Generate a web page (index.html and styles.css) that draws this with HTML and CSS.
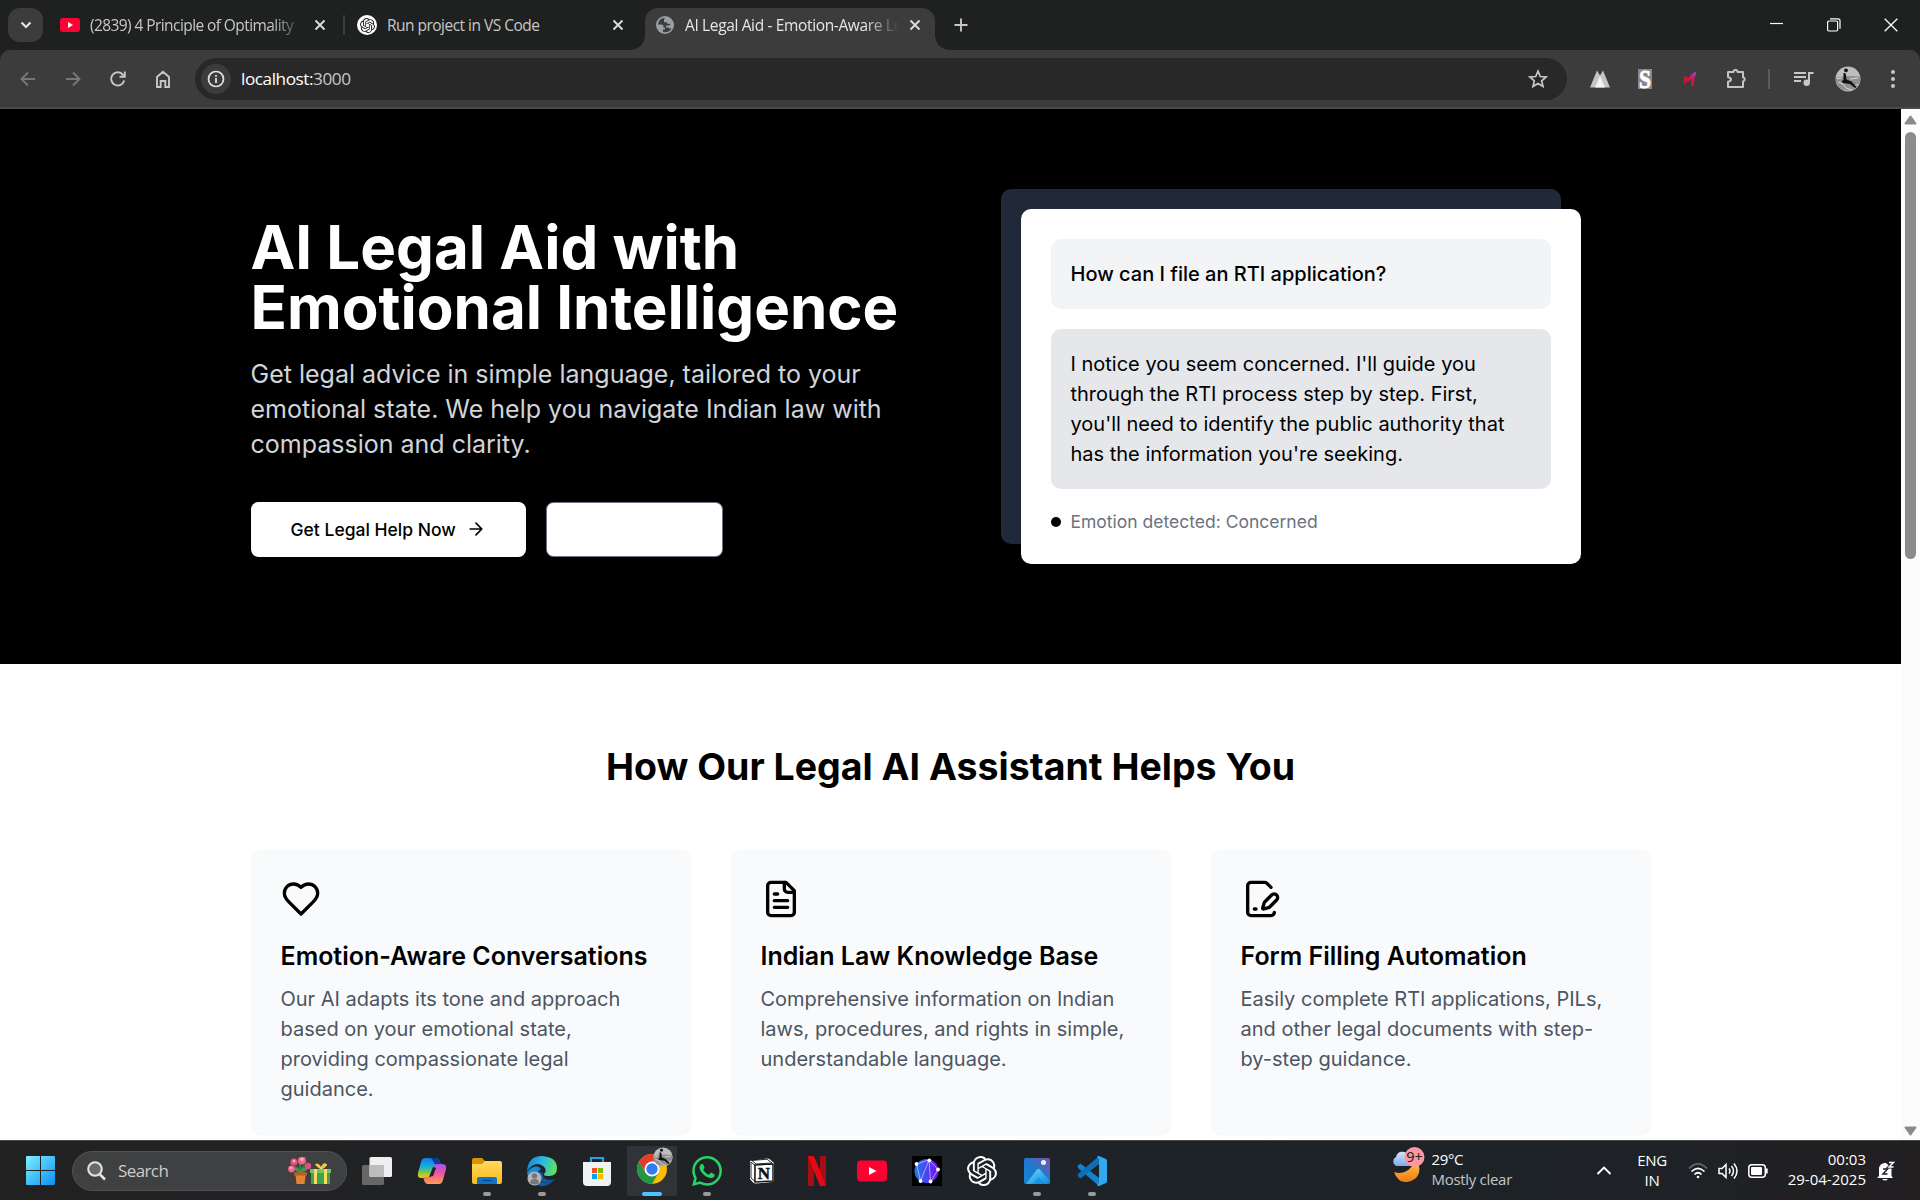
FILE: index.html
```html
<!DOCTYPE html>
<html lang="en">
<head>
<meta charset="utf-8">
<title>AI Legal Aid - Emotion-Aware Legal Assistant</title>
<link rel="stylesheet" href="styles.css">
</head>
<body>
<svg class="defs" width="0" height="0" aria-hidden="true">
  <defs>
    <symbol id="x" viewBox="0 0 12 12"><path d="M1.5 1.5l9 9M10.5 1.5l-9 9" fill="none" stroke="currentColor" stroke-width="1.9"/></symbol>
    <symbol id="openai" viewBox="0 0 24 24"><path fill="currentColor" d="M22.2819 9.8211a5.9847 5.9847 0 0 0-.5157-4.9108 6.0462 6.0462 0 0 0-6.5098-2.9A6.0651 6.0651 0 0 0 4.9807 4.1818a5.9847 5.9847 0 0 0-3.9977 2.9 6.0462 6.0462 0 0 0 .7427 7.0966 5.98 5.98 0 0 0 .511 4.9107 6.051 6.051 0 0 0 6.5146 2.9001A5.9847 5.9847 0 0 0 13.2599 24a6.0557 6.0557 0 0 0 5.7718-4.2058 5.9894 5.9894 0 0 0 3.9977-2.9001 6.0557 6.0557 0 0 0-.7475-7.0729zm-9.022 12.6081a4.4755 4.4755 0 0 1-2.8764-1.0408l.1419-.0804 4.7783-2.7582a.7948.7948 0 0 0 .3927-.6813v-6.7369l2.02 1.1686a.071.071 0 0 1 .038.052v5.5826a4.504 4.504 0 0 1-4.4945 4.4944zm-9.6607-4.1254a4.4708 4.4708 0 0 1-.5346-3.0137l.142.0852 4.783 2.7582a.7712.7712 0 0 0 .7806 0l5.8428-3.3685v2.3324a.0804.0804 0 0 1-.0332.0615L9.74 19.9502a4.4992 4.4992 0 0 1-6.1408-1.6464zM2.3408 7.8956a4.485 4.485 0 0 1 2.3655-1.9728V11.6a.7664.7664 0 0 0 .3879.6765l5.8144 3.3543-2.0201 1.1685a.0757.0757 0 0 1-.071 0l-4.8303-2.7865A4.504 4.504 0 0 1 2.3408 7.872zm16.5963 3.8558L13.1038 8.364 15.1192 7.2a.0757.0757 0 0 1 .071 0l4.8303 2.7913a4.4944 4.4944 0 0 1-.6765 8.1042v-5.6772a.79.79 0 0 0-.407-.667zm2.0107-3.0231l-.142-.0852-4.7735-2.7818a.7759.7759 0 0 0-.7854 0L9.409 9.2297V6.8974a.0662.0662 0 0 1 .0284-.0615l4.8303-2.7866a4.4992 4.4992 0 0 1 6.6802 4.66zM8.3065 12.863l-2.02-1.1638a.0804.0804 0 0 1-.038-.0567V6.0742a4.4992 4.4992 0 0 1 7.3757-3.4537l-.142.0805L8.704 5.459a.7948.7948 0 0 0-.3927.6813zm1.0976-2.3654l2.602-1.4998 2.6069 1.4998v2.9994l-2.5974 1.4997-2.6067-1.4997Z"/></symbol>
    <symbol id="portrait" viewBox="0 0 26 26"><circle cx="13" cy="13" r="12.5" fill="#bdbdbd"/><path d="M1 12c6-2 17-3 24-1v4c-1 5-6 9.500-12 9.500S1.500 21 1 15z" fill="#8f8f8f"/><path d="M3 16l5 2 3 4 6 2M15 13l8-1M2 13l5-1M20 20l3-2" stroke="#d8d8d8" fill="none"/><circle cx="11" cy="4.300" r="1.900" fill="#111"/><path d="M8.500 7q2.500-.500 2.500 2l.500 4.500 5 2 5 5.500-1.500 1-5-4-7-1q-2.500-2 .500-3z" fill="#111"/></symbol>
    <linearGradient id="win" x1="0" y1="0" x2="1" y2="1"><stop offset="0" stop-color="#7df0ff"/><stop offset="1" stop-color="#0b90f5"/></linearGradient>
    <linearGradient id="copA" x1="0" y1="0" x2="0" y2="1"><stop offset="0" stop-color="#1479e8"/><stop offset=".45" stop-color="#16b2d8"/><stop offset=".75" stop-color="#8fc93a"/><stop offset="1" stop-color="#ffc900"/></linearGradient>
    <linearGradient id="copB" x1="0" y1="0" x2="0" y2="1"><stop offset="0" stop-color="#a352ee"/><stop offset=".5" stop-color="#f2569b"/><stop offset="1" stop-color="#ffa24c"/></linearGradient>
    <linearGradient id="fold" x1="0" y1="0" x2="0" y2="1"><stop offset="0" stop-color="#ffda58"/><stop offset="1" stop-color="#f9b91e"/></linearGradient>
    <linearGradient id="edgeA" x1="0" y1=".3" x2="1" y2=".5"><stop offset="0" stop-color="#1587d8"/><stop offset=".5" stop-color="#2cb9e2"/><stop offset="1" stop-color="#5fe45c"/></linearGradient>
    <linearGradient id="edgeB" x1="0" y1="0" x2="1" y2="1"><stop offset="0" stop-color="#1b9de8"/><stop offset="1" stop-color="#0b4a94"/></linearGradient>
    <linearGradient id="mesh" x1="0" y1="0" x2="1" y2="0"><stop offset="0" stop-color="#1682e8"/><stop offset="1" stop-color="#7a0cf5"/></linearGradient>
    <linearGradient id="photo" x1="0" y1="1" x2="1" y2="0"><stop offset="0" stop-color="#1685d8"/><stop offset=".5" stop-color="#1f78cb"/><stop offset="1" stop-color="#7b55a8"/></linearGradient>
    <linearGradient id="hill" x1="0" y1="0" x2="1" y2="1"><stop offset="0" stop-color="#65e1fb"/><stop offset="1" stop-color="#0c86df"/></linearGradient>
    <linearGradient id="moon" x1="0" y1="0" x2="0" y2="1"><stop offset="0" stop-color="#ffc24a"/><stop offset="1" stop-color="#ee7d14"/></linearGradient>
    <linearGradient id="cloud" x1="0" y1="0" x2="0" y2="1"><stop offset="0" stop-color="#d4e4fb"/><stop offset="1" stop-color="#7fa9ec"/></linearGradient>
    <linearGradient id="em" x1="1" y1="0" x2="0" y2="1"><stop offset="0" stop-color="#a63bd6"/><stop offset=".5" stop-color="#d9123e"/><stop offset="1" stop-color="#b01328"/></linearGradient>
  </defs>
</svg>

<div class="screen">
  <header class="tabstrip">
    <button class="tab-search" aria-label="Search tabs"><svg width="12" height="8" viewBox="0 0 12 8"><path d="M1.500 1.500L6 6l4.500-4.500" fill="none" stroke="currentColor" stroke-width="2.200"/></svg></button>
    <div class="tab tab-one">
      <svg class="fav" width="20" height="14" viewBox="0 0 20 14"><rect width="20" height="14" rx="3" fill="#ff0033"/><path d="M8 4l5 3-5 3z" fill="#fff"/></svg>
      <span class="tab-title fade">(2839) 4 Principle of Optimality</span>
      <svg class="close" width="12" height="12"><use href="#x"/></svg>
    </div>
    <i class="tab-sep"></i>
    <div class="tab tab-two">
      <span class="gpt"><svg width="15" height="15"><use href="#openai"/></svg></span>
      <span class="tab-title">Run project in VS Code</span>
      <svg class="close" width="12" height="12"><use href="#x"/></svg>
    </div>
    <div class="tab tab-active">
      <svg class="globe" width="18" height="18" viewBox="0 0 18 18"><circle cx="9" cy="9" r="9" fill="#9aa0a6"/><path d="M2 8.500h3.500q2 0 2 2v1h2.500v-2h3q1.500-.200 1.300-1.700H11V6.200H8V3.600q0-1.200 1.500-1.900Q3 1.600 2 8.500zM9 11.500v2H7v2.600q6 1 8.500-3.600h-2.600v-1z" fill="#3c3c3c"/></svg>
      <span class="tab-title fade">AI Legal Aid - Emotion-Aware Le</span>
      <svg class="close" width="12" height="12"><use href="#x"/></svg>
    </div>
    <svg class="plus" width="14" height="14" viewBox="0 0 14 14"><path d="M7 .500v13M.500 7h13" stroke="currentColor" stroke-width="1.900"/></svg>
    <div class="win-ctl">
      <svg width="14" height="14" viewBox="0 0 14 14"><path d="M0 5.500h13" stroke="#fff" stroke-width="1.200"/></svg>
      <svg width="14" height="14" viewBox="0 0 14 14" fill="none" stroke="#fff" stroke-width="1.200"><rect x=".600" y="3" width="10" height="10" rx="1.200"/><path d="M3 .800h8q2 0 2 2v8"/></svg>
      <svg width="14" height="14" viewBox="0 0 14 14"><path d="M.700.700l12.600 12.600M13.300.700L.700 13.300" stroke="#fff" stroke-width="1.300"/></svg>
    </div>
  </header>

  <div class="toolbar-wrap"><div class="toolbar">
    <nav class="nav">
      <svg class="off" width="16" height="16" viewBox="0 0 16 16"><path d="M15 8H2M8 1.500L1.500 8 8 14.500"/></svg>
      <svg class="off" width="16" height="16" viewBox="0 0 16 16"><path d="M1 8h13M8 1.500L14.500 8 8 14.500"/></svg>
      <svg width="16" height="16" viewBox="0 0 16 16"><path d="M14.200 9.500A6.600 6.600 0 1 1 13 3.800l1.500 1.700M14.800.500v5.300H9.500"/></svg>
      <svg width="16" height="18" viewBox="0 0 16 18"><path d="M2 7l6-5.300L14 7v10h-3.700v-6H5.700v6H2z"/></svg>
    </nav>
    <div class="omnibox">
      <span class="info"><svg width="18" height="18" viewBox="0 0 18 18"><circle cx="9" cy="9" r="7.500" fill="none" stroke="#e3e3e3" stroke-width="1.700"/><path d="M9 8v5M9 5v1.800" stroke="#e3e3e3" stroke-width="1.800"/></svg></span>
      <span class="url"><b>localhost:</b>3000</span>
      <svg class="star" width="20" height="20" viewBox="0 0 20 20"><path d="M10 2.200l2.300 5.300 5.800.5-4.400 3.800 1.300 5.700-5-3-5 3 1.300-5.700L1.900 8l5.800-.5z" fill="none" stroke="#c7c7c7" stroke-width="1.700"/></svg>
    </div>
    <div class="ext">
      <svg class="e1" width="20" height="18" viewBox="0 0 20 18"><path d="M0 17.500L7 .500l3 5 3-5 7 17z" fill="#c4c4c4"/><path d="M5 17.500l5-11.500 5 11.500z" fill="#f2f2f2"/></svg>
      <svg class="e2" width="14" height="20" viewBox="0 0 14 20"><rect width="14" height="20" fill="#888"/><text x="1" y="18.800" font-family="Liberation Serif" font-weight="700" font-size="26" fill="#fff" stroke="#fff" stroke-width=".800" textLength="12" lengthAdjust="spacingAndGlyphs">S</text></svg>
      <svg class="e3" width="14" height="16" viewBox="0 0 14 16"><path d="M.500 6l2.500-1 2 2 5-5 3-1.500V4l-1.500 1.500-.800 10-3-1 .800-6L5 11l-1.500-1-1 4-2-1z" fill="url(#em)"/></svg>
      <svg class="e4" width="21" height="21" viewBox="0 0 21 21"><path d="M2 4h5.500a2 2 0 0 1 4 0H17v5.200a2.200 2.200 0 0 1 0 4.300V19H2v-5.200q3-1 3-2.400T2 9z" fill="none" stroke="#c4c4c4" stroke-width="2" stroke-linejoin="round"/></svg>
      <i class="bar"></i>
      <svg class="e5" width="20" height="16" viewBox="0 0 20 16"><path d="M0 2h12M0 6h12M0 10h7M15 12V2h4.500" fill="none" stroke="#c7c7c7" stroke-width="2"/><circle cx="12.700" cy="11.800" r="3.200" fill="#c7c7c7"/></svg>
      <svg class="e6" width="26" height="26"><use href="#portrait"/></svg>
      <svg class="e7" width="4" height="18" viewBox="0 0 4 18" fill="#c7c7c7"><circle cx="2" cy="2" r="2"/><circle cx="2" cy="9" r="2"/><circle cx="2" cy="16" r="2"/></svg>
    </div>
  </div></div>

  <div class="viewport">
    <main class="page">
      <section class="hero"><div class="wrap hero-grid">
        <div class="pitch">
          <h1>AI Legal Aid with Emotional Intelligence</h1>
          <p>Get legal advice in simple language, tailored to your emotional state. We help you navigate Indian law with compassion and clarity.</p>
          <div class="actions">
            <a class="btn">Get Legal Help Now <svg width="20" height="20" viewBox="0 0 24 24" fill="none" stroke="currentColor" stroke-width="2" stroke-linecap="round" stroke-linejoin="round"><path d="M5 12h14M12 5l7 7-7 7"/></svg></a>
            <a class="btn outline"></a>
          </div>
        </div>
        <div class="demo">
          <div class="demo-back"></div>
          <div class="demo-card">
            <p class="bubble ask">How can I file an RTI application?</p>
            <p class="bubble reply">I notice you seem concerned. I'll guide you through the RTI process step by step. First, you'll need to identify the public authority that has the information you're seeking.</p>
            <div class="emotion"><i></i>Emotion detected: Concerned</div>
          </div>
        </div>
      </div></section>
      <section class="features"><div class="wrap">
        <h2>How Our Legal AI Assistant Helps You</h2>
        <div class="cards">
          <article class="card">
            <svg class="lucide" viewBox="0 0 24 24"><path d="M19 14c1.490-1.460 3-3.210 3-5.500A5.500 5.500 0 0 0 16.500 3c-1.760 0-3 .500-4.500 2-1.500-1.500-2.740-2-4.500-2A5.500 5.500 0 0 0 2 8.500c0 2.300 1.500 4.050 3 5.500l7 7Z"/></svg>
            <h3>Emotion-Aware Conversations</h3>
            <p>Our AI adapts its tone and approach based on your emotional state, providing compassionate legal guidance.</p>
          </article>
          <article class="card">
            <svg class="lucide" viewBox="0 0 24 24"><path d="M15 2H6a2 2 0 0 0-2 2v16a2 2 0 0 0 2 2h12a2 2 0 0 0 2-2V7Z"/><path d="M14 2v4a2 2 0 0 0 2 2h4M10 9H8M16 13H8M16 17H8"/></svg>
            <h3>Indian Law Knowledge Base</h3>
            <p>Comprehensive information on Indian laws, procedures, and rights in simple, understandable language.</p>
          </article>
          <article class="card">
            <svg class="lucide" viewBox="0 0 24 24"><path d="m18 5-2.414-2.414A2 2 0 0 0 14.172 2H6a2 2 0 0 0-2 2v16a2 2 0 0 0 2 2h12a2 2 0 0 0 2-2"/><path d="M21.378 12.626a1 1 0 0 0-3.004-3.004l-4.010 4.012a2 2 0 0 0-.506.854l-.837 2.870a.500.500 0 0 0 .620.620l2.870-.837a2 2 0 0 0 .854-.506zM8 18h1"/></svg>
            <h3>Form Filling Automation</h3>
            <p>Easily complete RTI applications, PILs, and other legal documents with step-by-step guidance.</p>
          </article>
        </div>
      </div></section>
    </main>
    <div class="scroll">
      <svg width="13" height="10" viewBox="0 0 13 10"><path d="M6.500 1.500L11.500 8.500H1.500z" fill="#8b8b8b" stroke="#8b8b8b" stroke-width="2" stroke-linejoin="round"/></svg>
      <div class="thumb"></div>
      <svg class="down" width="13" height="10" viewBox="0 0 13 10"><path d="M6.500 8.500L1.500 1.500h10z" fill="#8b8b8b" stroke="#8b8b8b" stroke-width="2" stroke-linejoin="round"/></svg>
    </div>
  </div>

  <footer class="taskbar">
    <svg class="start" width="29" height="29" viewBox="0 0 29 29"><path d="M1 0h13v14H0V1q0-1 1-1zM15 0h13q1 0 1 1v13H15zM0 15h14v14H1q-1 0-1-1zM15 15h14v13q0 1-1 1H15z" fill="url(#win)"/></svg>
    <div class="search">
      <svg width="19" height="20" viewBox="0 0 19 20" fill="none" stroke="#e6e6e6"><circle cx="8" cy="8" r="6.800" stroke-width="2" fill="#6a6a6a"/><path d="M13 13.500l5 5" stroke-width="2.500"/></svg>
      <span>Search</span>
      <svg class="gift" width="44" height="28" viewBox="0 0 44 28">
        <path d="M12 16V6M12 15Q9 8 5 11M12 15q4-9 9-6" stroke="#2f8043" stroke-width="2" fill="none"/><path d="M12 15q-6-1-7-4 6-1 7 4 2-6 8-4-1 4-8 4z" fill="#3f9a58"/>
        <circle cx="6" cy="5" r="3.600" fill="#e94d77"/><circle cx="14" cy="3.500" r="4" fill="#f0668c"/><circle cx="20" cy="9" r="3.200" fill="#e94d77"/><circle cx="3.500" cy="12" r="3.400" fill="#f0668c"/><circle cx="6" cy="4" r="1.500" fill="#ffacbf"/><circle cx="14" cy="2.500" r="1.700" fill="#ffacbf"/><circle cx="3" cy="11" r="1.300" fill="#ffacbf"/>
        <path d="M6.500 15.500h12v3h-1L16.500 27h-8l-1-8.500h-1z" fill="#e58335"/><path d="M6.500 15.500h12v3h-12z" fill="#b95d20"/>
        <rect x="23" y="14" width="19" height="13" fill="#39a552"/><rect x="22" y="12" width="21" height="4" fill="#66c86c"/><path d="M26 12h3v15h-3zM36 12h3v15h-3z" fill="#ffda5e"/><path d="M33 12q-8-5-4-5 3 0 4 5 1-6 5-5 2 2-5 5z" fill="#f2b92e" stroke="#ffda5e"/>
      </svg>
    </div>
    <div class="apps">
      <span class="app"><svg width="30" height="30" viewBox="0 0 30 30"><rect x="0" y="9" width="22" height="20" rx="1.500" fill="#676767"/><rect x="7.500" y="1" width="22.500" height="20" rx="1.500" fill="#efefef"/><path d="M7.500 9H22v12H8.500q-1 0-1-1z" fill="#bdbdbd"/></svg></span>
      <span class="app"><svg width="30" height="30" viewBox="0 0 30 30"><path d="M8 2h11q3 0 4 4l1 3h-4q-3 0-4 4l-2 6q-1 3-4 3H4q-4 0-3-5L4 6q1-4 4-4z" fill="url(#copA)"/><path d="M19 2q3 0 4 4l1 3h-5q-2-1-3-4t-4-3z" fill="#123b98"/><path d="M22 28H11q-3 0-4-4l-1-3h4q3 0 4-4l2-6q1-3 4-3h5q5 0 4 5l-3 11q-1 4-4 4z" fill="url(#copB)"/><path d="M16 11l3 1-3 8-4 1z" fill="#202225"/></svg></span>
      <span class="app on"><svg width="30" height="30" viewBox="0 0 30 30"><path d="M0 4q0-2 2-2h8l3 3h3v7H0z" fill="#d99303"/><path d="M0 8h10l3-3h15q2 0 2 2v19q0 2-2 2H2q-2 0-2-2z" fill="url(#fold)"/><path d="M5 28v-5q0-2 2-2h16q2 0 2 2v5z" fill="#0f73c7"/><path d="M10 24.500h10" stroke="#0a4e91" stroke-width="1.500"/></svg></span>
      <span class="app on"><svg width="30" height="30" viewBox="0 0 30 30"><path d="M0 16A15 15 0 0 0 26 25q-9 5-14-1-4-6 2-11-5-6-14 3z" fill="url(#edgeB)"/><path d="M0 15Q1 0 15 0q15 1 15 12 0 8-8 8-6 0-5-2 4-4-1-8-8-6-16 5z" fill="url(#edgeA)"/><path d="M11 15q-1 12 9 12 5 0 8-4-5 2-9 0t-3-6z" fill="#10579f"/><circle cx="7.500" cy="22.500" r="7" fill="#b5b5b5"/><circle cx="7.500" cy="20" r="2.700" fill="#777"/><path d="M3 27q0-4 4.500-4t4.500 4q-4 3-9 0z" fill="#777"/></svg></span>
      <span class="app"><svg width="30" height="30" viewBox="0 0 30 30"><path d="M9 7V2h12v5" fill="none" stroke="#23a2ea" stroke-width="2.200"/><path d="M1 6h28v20q0 4-4 4H5q-4 0-4-4z" fill="#f0f1f2"/><path d="M10 12h5v5h-5z" fill="#f25022"/><path d="M16 12h5v5h-5z" fill="#7fba00"/><path d="M10 18h5v5h-5z" fill="#00a4ef"/><path d="M16 18h5v5h-5z" fill="#ffb900"/></svg></span>
      <span class="app active"><svg width="38" height="38" viewBox="0 0 38 38"><circle cx="17" cy="22" r="15" fill="#fbbc05"/><path d="M4 14.500A15 15 0 0 1 30 14.500H17l-6.500 11z" fill="#e33b2e"/><path d="M4 14.500A15 15 0 0 0 17 37l6.500-11.200-13 0z" fill="#229546"/><circle cx="17" cy="22" r="7.500" fill="#fff"/><circle cx="17" cy="22" r="5.700" fill="#2f7cf0"/><svg x="18" y="0" width="20" height="20"><use href="#portrait"/></svg></svg></span>
      <span class="app on"><svg width="30" height="30" viewBox="0 0 24 24"><path fill="#25d366" d="M17.472 14.382c-.297-.149-1.758-.867-2.030-.967-.273-.099-.471-.148-.670.150-.197.297-.767.966-.940 1.164-.173.199-.347.223-.644.075-.297-.150-1.255-.463-2.390-1.475-.883-.788-1.480-1.761-1.653-2.059-.173-.297-.018-.458.130-.606.134-.133.298-.347.446-.520.149-.174.198-.298.298-.497.099-.198.050-.371-.025-.520-.075-.149-.669-1.612-.916-2.207-.242-.579-.487-.500-.669-.510-.173-.008-.371-.010-.570-.010-.198 0-.520.074-.792.372-.272.297-1.040 1.016-1.040 2.479 0 1.462 1.065 2.875 1.213 3.074.149.198 2.096 3.200 5.077 4.487.709.306 1.262.489 1.694.625.712.227 1.360.195 1.871.118.571-.085 1.758-.719 2.006-1.413.248-.694.248-1.289.173-1.413-.074-.124-.272-.198-.570-.347m-5.421 7.403h-.004a9.870 9.870 0 0 1-5.031-1.378l-.361-.214-3.741.982.998-3.648-.235-.374a9.860 9.860 0 0 1-1.510-5.260c.001-5.450 4.436-9.884 9.888-9.884 2.640 0 5.122 1.030 6.988 2.898a9.825 9.825 0 0 1 2.893 6.994c-.003 5.450-4.437 9.884-9.885 9.884m8.413-18.297A11.815 11.815 0 0 0 12.050 0C5.495 0 .160 5.335.157 11.892c0 2.096.547 4.142 1.588 5.945L.057 24l6.305-1.654a11.882 11.882 0 0 0 5.683 1.448h.005c6.554 0 11.890-5.335 11.893-11.893a11.821 11.821 0 0 0-3.480-8.413Z"/></svg></span>
      <span class="app"><svg width="26" height="28" viewBox="0 0 26 28"><path d="M1 4l17-2.500q2 0 3 1L25 6v17q0 2-2 2L7 26.500q-2 0-3-1L1 22z" fill="#fff"/><path d="M2 5l4 3.500v16L2 21zM3 3.500l15-1.300L23 6 7 7z" fill="#fff" stroke="#191919" stroke-width=".900"/><path d="M6 8l18-1v17L6 25z" fill="#fff" stroke="#191919" stroke-width="1.500"/><text x="15" y="22" text-anchor="middle" font-family="Liberation Serif" font-weight="700" font-size="17" fill="#111" stroke="#111" stroke-width=".500">N</text></svg></span>
      <span class="app"><svg width="18" height="30" viewBox="0 0 18 30"><path d="M0 0h6v30H0zM12 0h6v30h-6z" fill="#a90d14"/><path d="M0 0h6l12 30h-6z" fill="#e50914"/></svg></span>
      <span class="app"><svg width="30" height="22" viewBox="0 0 30 22"><rect y=".500" width="30" height="21" rx="4" fill="#ff0033"/><path d="M12 7l7.500 4-7.500 4z" fill="#fff"/></svg></span>
      <span class="app"><svg width="30" height="30" viewBox="0 0 30 30"><path d="M0 0h30v30H0z" fill="#000"/><circle cx="14.500" cy="15" r="12" fill="url(#mesh)"/><path d="M4.500 8l4 17 8.500-21 1.500 22L26 13.500M4.500 8L17 4l9 9.500" fill="none" stroke="#bda7ff" stroke-width=".900"/><g fill="#fff"><circle cx="4.500" cy="8" r="1.900"/><circle cx="17.300" cy="4.300" r="1.900"/><circle cx="26" cy="13.500" r="1.900"/><circle cx="8.500" cy="25" r="1.900"/><circle cx="18.500" cy="25.500" r="1.900"/></g></svg></span>
      <span class="app white"><svg width="30" height="30"><use href="#openai"/></svg></span>
      <span class="app on"><svg width="26" height="26" viewBox="0 0 26 26"><rect width="26" height="26" rx="2" fill="url(#photo)"/><path d="M2 26l11-14.500q1.500-1.500 3 0L26 23v1q0 2-2 2z" fill="url(#hill)"/><path d="M8 26l6.500-7 6 7z" fill="#0c86df" opacity=".5"/><circle cx="19.500" cy="4.500" r="2.500" fill="#eee"/></svg></span>
      <span class="app on"><svg width="30" height="30" viewBox="0 0 30 30"><path d="M1.500 9l2-1.600L22 22v8L1 12q-1-1.500.500-3z" fill="#1483cf"/><path d="M1.500 21l2 1.600L22 8V0L1 18q-1 1.500.500 3z" fill="#0d6fb8"/><path d="M22 0l7 3q1 .500 1 2v20q0 1.500-1 2l-7 3q-1 .300-2-1l2-2V3l-2-2q1-1.300 2-1z" fill="#31a8f0"/></svg></span>
    </div>
    <div class="weather">
      <svg width="35" height="38" viewBox="0 0 35 38"><path d="M5 20a5 5 0 0 1 0-9 6.500 6.500 0 0 1 12-2q5 1 5 6t-5 5z" fill="url(#cloud)"/><path d="M3 26q13 4 20-9l1-2q6 4 4 12-3 8-12 9T3 26z" fill="url(#moon)"/><circle cx="23.500" cy="11" r="10" fill="#ff97a3"/><text x="23.500" y="16.200" text-anchor="middle" font-family="Noto Sans" font-size="14" fill="#222" textLength="16.500" lengthAdjust="spacingAndGlyphs">9+</text></svg>
      <div class="two"><span>29°C</span><span class="dim">Mostly clear</span></div>
    </div>
    <div class="tray">
      <svg class="up" width="16" height="9" viewBox="0 0 16 9"><path d="M1.500 8L8 1.500 14.500 8" fill="none" stroke="#fff" stroke-width="1.900"/></svg>
      <div class="two lang"><span>ENG</span><span>IN</span></div>
      <svg class="wifi" width="20" height="16" viewBox="0 0 20 16" fill="none" stroke="#fff" stroke-width="1.700"><path d="M1 5.500q9-9 18 0" stroke="#666"/><path d="M3.500 8.500q6.500-6.500 13 0M6.500 11.500q3.500-3.500 7 0"/><circle cx="10" cy="14" r="1.300" fill="#fff" stroke="none"/></svg>
      <svg class="vol" width="20" height="18" viewBox="0 0 20 18" fill="none" stroke="#fff" stroke-width="1.500"><path d="M1 6.500h3l4-4v13l-4-4H1zM11 6.500q2 2.500 0 5M13.500 4q4 5 0 10M16 1.500q6 7.500 0 15"/></svg>
      <svg class="bat" width="20" height="14" viewBox="0 0 20 14"><rect x=".800" y=".800" width="16.500" height="12.400" rx="3" fill="none" stroke="#fff" stroke-width="1.500"/><rect x="3" y="3" width="11" height="8" rx="1" fill="#fff"/><path d="M18.700 4.500v5" stroke="#fff" stroke-width="2"/></svg>
      <div class="two clock"><span>00:03</span><span>29-04-2025</span></div>
      <svg class="bell" width="18" height="20" viewBox="0 0 18 20"><path d="M2 15V8.500A6 6 0 0 1 9 2l5.500 5v8l1.500 2H0z" fill="#fff"/><path d="M5 18h6q-3 3-6 0z" fill="#fff"/><path d="M6 8h4.500L6 13h4.500" fill="none" stroke="#1f2226" stroke-width="1.500"/><path d="M12 1.500h4.500L12 6h4.500" fill="none" stroke="#1f2226" stroke-width="3"/><path d="M12 1.500h4.500L12 6h4.500" fill="none" stroke="#fff" stroke-width="1.400"/></svg>
    </div>
  </footer>
</div>
</body>
</html>
```
FILE: styles.css
```css
* { box-sizing: border-box; }
body, h1, h2, h3, p { margin: 0; }
body { overflow: hidden; background: #1f2120; font-family: Inter, sans-serif; }
svg { display: block; flex: none; }
.defs { position: absolute; }
.screen { width: 1920px; height: 1200px; display: grid; grid-template-rows: 50px 59px 1031px 60px; overflow: hidden; }

/* Tab strip */
.tabstrip { display: flex; align-items: center; background: #1f2120; padding-left: 8px; font: 15.5px "Open Sans", sans-serif; color: #c7c7c7; }
.tab-search { width: 35px; height: 34px; border: 0; border-radius: 12px; background: #3c3c3c; color: #e3e3e3; display: grid; place-items: center; padding: 0; }
.tab { display: flex; align-items: center; height: 42px; }
.tab-title { white-space: nowrap; letter-spacing: -0.52px; }
.fade { -webkit-mask-image: linear-gradient(90deg, #000 84%, transparent); mask-image: linear-gradient(90deg, #000 84%, transparent); }
.close { margin-left: auto; color: #dcdcdc; }
.tab-one { width: 283px; padding-left: 17px; }
.tab-one .tab-title { margin-left: 10px; width: 215px; letter-spacing: -0.58px; }
.tab-sep { width: 2px; height: 20px; margin-left: 17px; background: #3c3c3c; border-radius: 1px; }
.tab-two { width: 278px; margin-left: 12px; }
.gpt { width: 20px; height: 20px; border-radius: 50%; background: #fff; color: #222; display: grid; place-items: center; margin-right: 10px; }
.tab-two .close { margin-right: 11px; }
.tab-active { position: relative; width: 290px; margin-left: 10px; align-self: flex-end; background: #3c3c3c; border-radius: 13px 13px 0 0; padding: 0 14px 8px 11px; color: #e6e6e6; }
.tab-active::before, .tab-active::after { content: ""; position: absolute; bottom: 0; width: 14px; height: 14px; }
.tab-active::before { left: -14px; background: radial-gradient(circle at 0 0, transparent 13.5px, #3c3c3c 14px); }
.tab-active::after { right: -14px; background: radial-gradient(circle at 100% 0, transparent 13.5px, #3c3c3c 14px); }
.tab-active .tab-title { margin-left: 11px; width: 214px; letter-spacing: -0.36px; }
.plus { margin-left: 19px; }
.win-ctl { margin-left: auto; margin-right: 22px; display: flex; gap: 43px; }

/* Toolbar */
.toolbar-wrap { background: #1f2120; }
.toolbar { height: 59px; display: flex; align-items: center; background: #3c3c3c; border-radius: 10px 10px 0 0; border-bottom: 2px solid #4a4a4a; }
.nav { width: 195px; padding-left: 20px; display: flex; align-items: center; gap: 29px; }
.nav svg { fill: none; stroke: #c7c7c7; stroke-width: 1.9; }
.nav svg.off { stroke: #777; }
.omnibox { width: 1372px; height: 42px; border-radius: 21px; background: #282828; display: flex; align-items: center; padding: 0 19px 0 6px; }
.info { width: 30px; height: 30px; border-radius: 50%; background: #3c3c3c; display: grid; place-items: center; }
.url { margin-left: 10px; font: 17.2px "Open Sans", sans-serif; letter-spacing: -0.45px; color: #c7c7c7; }
.url b { font-weight: 400; color: #fff; }
.star { margin-left: auto; }
.ext { display: flex; align-items: center; }
.e1 { margin-left: 23px; }
.e2 { margin-left: 28px; }
.e3 { margin-left: 31px; }
.e4 { margin-left: 29px; }
.bar { width: 2px; height: 20px; margin-left: 21px; background: #5c5c5c; }
.e5 { margin-left: 24px; }
.e6 { margin-left: 21px; }
.e7 { margin-left: 30px; }

/* Web page */
.viewport { display: grid; grid-template-columns: 1901px 19px; overflow: hidden; background: #fff; }
.page { height: 1031px; overflow: hidden; color: #000; }
.wrap { width: 1400px; margin: 0 auto; }
.hero { background: #000; padding: 100px 0; }
.hero-grid { display: flex; align-items: center; }
.pitch { width: 680px; color: #fff; }
.pitch h1 { font-size: 60px; line-height: 60px; font-weight: 700; }
.pitch p { margin-top: 20px; font-size: 25px; line-height: 35px; color: #d1d5db; }
.actions { margin-top: 40px; display: flex; gap: 20px; }
.btn { height: 55px; padding: 0 40px; border-radius: 7.5px; background: #fff; color: #000; display: flex; align-items: center; gap: 10px; font-size: 17.5px; font-weight: 500; white-space: nowrap; }
.btn.outline { width: 177px; border: 1px solid #6b7280; }
.demo { position: relative; width: 560px; margin-left: 90px; }
.demo-back { position: absolute; left: -20px; top: -20px; width: 100%; height: 100%; border-radius: 10px; background: #1f2937; }
.demo-card { position: relative; background: #fff; border-radius: 10px; padding: 30px; }
.bubble { padding: 20px; border-radius: 10px; font-size: 20px; line-height: 30px; }
.ask { background: #f3f4f6; font-weight: 500; }
.reply { background: #e5e7eb; margin-top: 20px; }
.emotion { margin-top: 20px; display: flex; align-items: center; gap: 10px; font-size: 17.5px; line-height: 25px; color: #6b7280; }
.emotion i { width: 10px; height: 10px; border-radius: 50%; background: #000; }
.features { padding: 80px 0; background: #fff; }
.features h2 { font-size: 37.5px; line-height: 45px; font-weight: 700; text-align: center; }
.cards { margin-top: 60px; display: grid; grid-template-columns: repeat(3, 440px); gap: 40px; }
.card { height: 285px; padding: 30px; border-radius: 10px; background: #f9fafb; box-shadow: 0 1px 2px rgba(0, 0, 0, .05); }
.lucide { width: 40px; height: 40px; fill: none; stroke: #000; stroke-width: 2; stroke-linecap: round; stroke-linejoin: round; }
.card h3 { margin-top: 20px; font-size: 25px; line-height: 35px; font-weight: 600; white-space: nowrap; }
.card p { margin-top: 10px; font-size: 20px; line-height: 30px; color: #4b5563; }
.scroll { background: #fcfcfc; display: flex; flex-direction: column; align-items: center; padding: 6px 0 4px; }
.thumb { width: 11px; height: 427px; margin-top: 7px; border-radius: 6px; background: #8b8b8b; }
.down { margin-top: auto; }

/* Taskbar */
.taskbar { display: flex; align-items: center; border-top: 1px solid #46484a; background: linear-gradient(90deg, #222122, #202225 30%, #1d2328 55%, #1e2226 85%, #221f21); font: 15px "Open Sans", sans-serif; color: #fff; }
.start { margin-left: 26px; }
.search { width: 275px; height: 40px; margin-left: 17px; border-radius: 20px; background: #3f4041; border: 1px solid #515253; display: flex; align-items: center; padding: 0 14px; font-size: 17px; letter-spacing: -0.6px; color: #ccc; }
.search span { margin-left: 12px; }
.gift { margin-left: auto; }
.apps { display: flex; margin-left: 2.5px; }
.app { position: relative; width: 55px; height: 50px; display: grid; place-items: center; }
.app.white { color: #fff; }
.on::after, .active::after { content: ""; position: absolute; left: 23.5px; bottom: 0; width: 8px; height: 4px; border-radius: 2px; background: #9a9a9a; }
.active { background: linear-gradient(#303337, #303337) center / 50px 50px no-repeat; }
.active svg { margin: -9px 0 0 4px; }
.active svg svg { margin: 0; }
.active::after { left: 17.500px; width: 20px; background: #4cc2ff; }
.weather { display: flex; align-items: center; margin-left: 271px; }
.weather > svg { margin-top: -11px; }
.two { display: flex; flex-direction: column; line-height: 20px; letter-spacing: -0.35px; white-space: nowrap; margin-top: -4px; }
.weather .two { margin-left: 6px; }
.dim { color: #c4c6c8; letter-spacing: -0.3px; }
.tray { display: flex; align-items: center; margin-left: auto; }
.up { margin-right: 24px; }
.lang { width: 32px; align-items: center; margin-top: -2px; }
.wifi { margin-left: 20px; }
.vol { margin-left: 10px; }
.bat { margin-left: 10px; }
.clock { width: 78px; margin-left: 20px; align-items: flex-end; letter-spacing: 0; }
.bell { margin-left: 11px; margin-right: 25px; }
```
